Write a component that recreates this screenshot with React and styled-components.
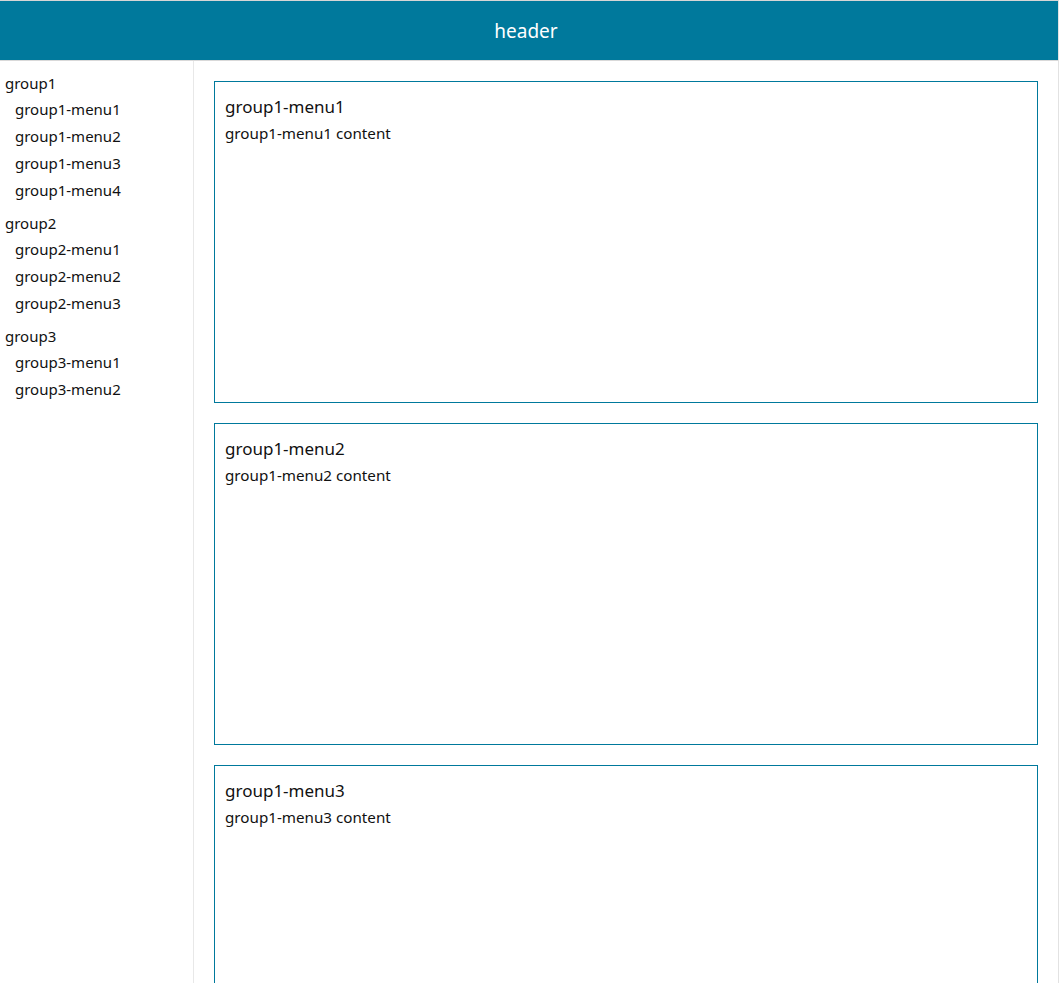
import React from "react";
import styled, { createGlobalStyle } from "styled-components";

const GlobalStyle = createGlobalStyle`
  html, body { margin: 0; padding: 0; background: #fff; }
  body { font-family: "Noto Sans", "Liberation Sans", sans-serif; color: #111; }
  * { box-sizing: border-box; }
`;

const Page = styled.div`
  height: 983px;
  border-top: 1px solid #d6d6d6;
  border-right: 1px solid #e2e2e2;
  display: flex;
  flex-direction: column;
  overflow: hidden;
`;

const Header = styled.header`
  flex: 0 0 60px;
  background: #00799c;
  border-bottom: 1px solid #d9d9d9;
  color: #fff;
  display: flex;
  align-items: center;
  justify-content: center;
  font-size: 19px;
  padding-right: 6px;
`;

const Body = styled.div`
  flex: 1;
  display: flex;
  min-height: 0;
`;

const Sidebar = styled.nav`
  width: 194px;
  flex: 0 0 194px;
  border-right: 1px solid #e8e8e8;
  padding-top: 9px;
`;

const Group = styled.div`
  & + & { margin-top: 6px; }
`;

const GroupLabel = styled.div`
  height: 26px;
  line-height: 26px;
  padding-left: 5px;
  font-size: 15px;
`;

const MenuItem = styled.div`
  height: 27px;
  line-height: 27px;
  padding-left: 15px;
  font-size: 15px;
`;

const Main = styled.main`
  flex: 1;
  padding: 20px;
  display: flex;
  flex-direction: column;
  gap: 20px;
  overflow-y: auto;
  scrollbar-width: none;
  &::-webkit-scrollbar { display: none; }
`;

const Card = styled.section`
  flex: 0 0 322px;
  border: 1px solid #00799c;
  padding: 10px;
`;

const CardTitle = styled.div`
  font-size: 17px;
  line-height: 30px;
`;

const CardContent = styled.div`
  font-size: 15.2px;
  line-height: 22px;
`;

const groups = [
  { name: "group1", menus: ["group1-menu1", "group1-menu2", "group1-menu3", "group1-menu4"] },
  { name: "group2", menus: ["group2-menu1", "group2-menu2", "group2-menu3"] },
  { name: "group3", menus: ["group3-menu1", "group3-menu2"] },
];

const allMenus = groups.flatMap((g) => g.menus);

export default function App() {
  return (
    <>
      <GlobalStyle />
      <Page>
        <Header>header</Header>
        <Body>
          <Sidebar>
            {groups.map((g) => (
              <Group key={g.name}>
                <GroupLabel>{g.name}</GroupLabel>
                {g.menus.map((m) => (
                  <MenuItem key={m}>{m}</MenuItem>
                ))}
              </Group>
            ))}
          </Sidebar>
          <Main>
            {allMenus.map((m) => (
              <Card key={m}>
                <CardTitle>{m}</CardTitle>
                <CardContent>{m} content</CardContent>
              </Card>
            ))}
          </Main>
        </Body>
      </Page>
    </>
  );
}
